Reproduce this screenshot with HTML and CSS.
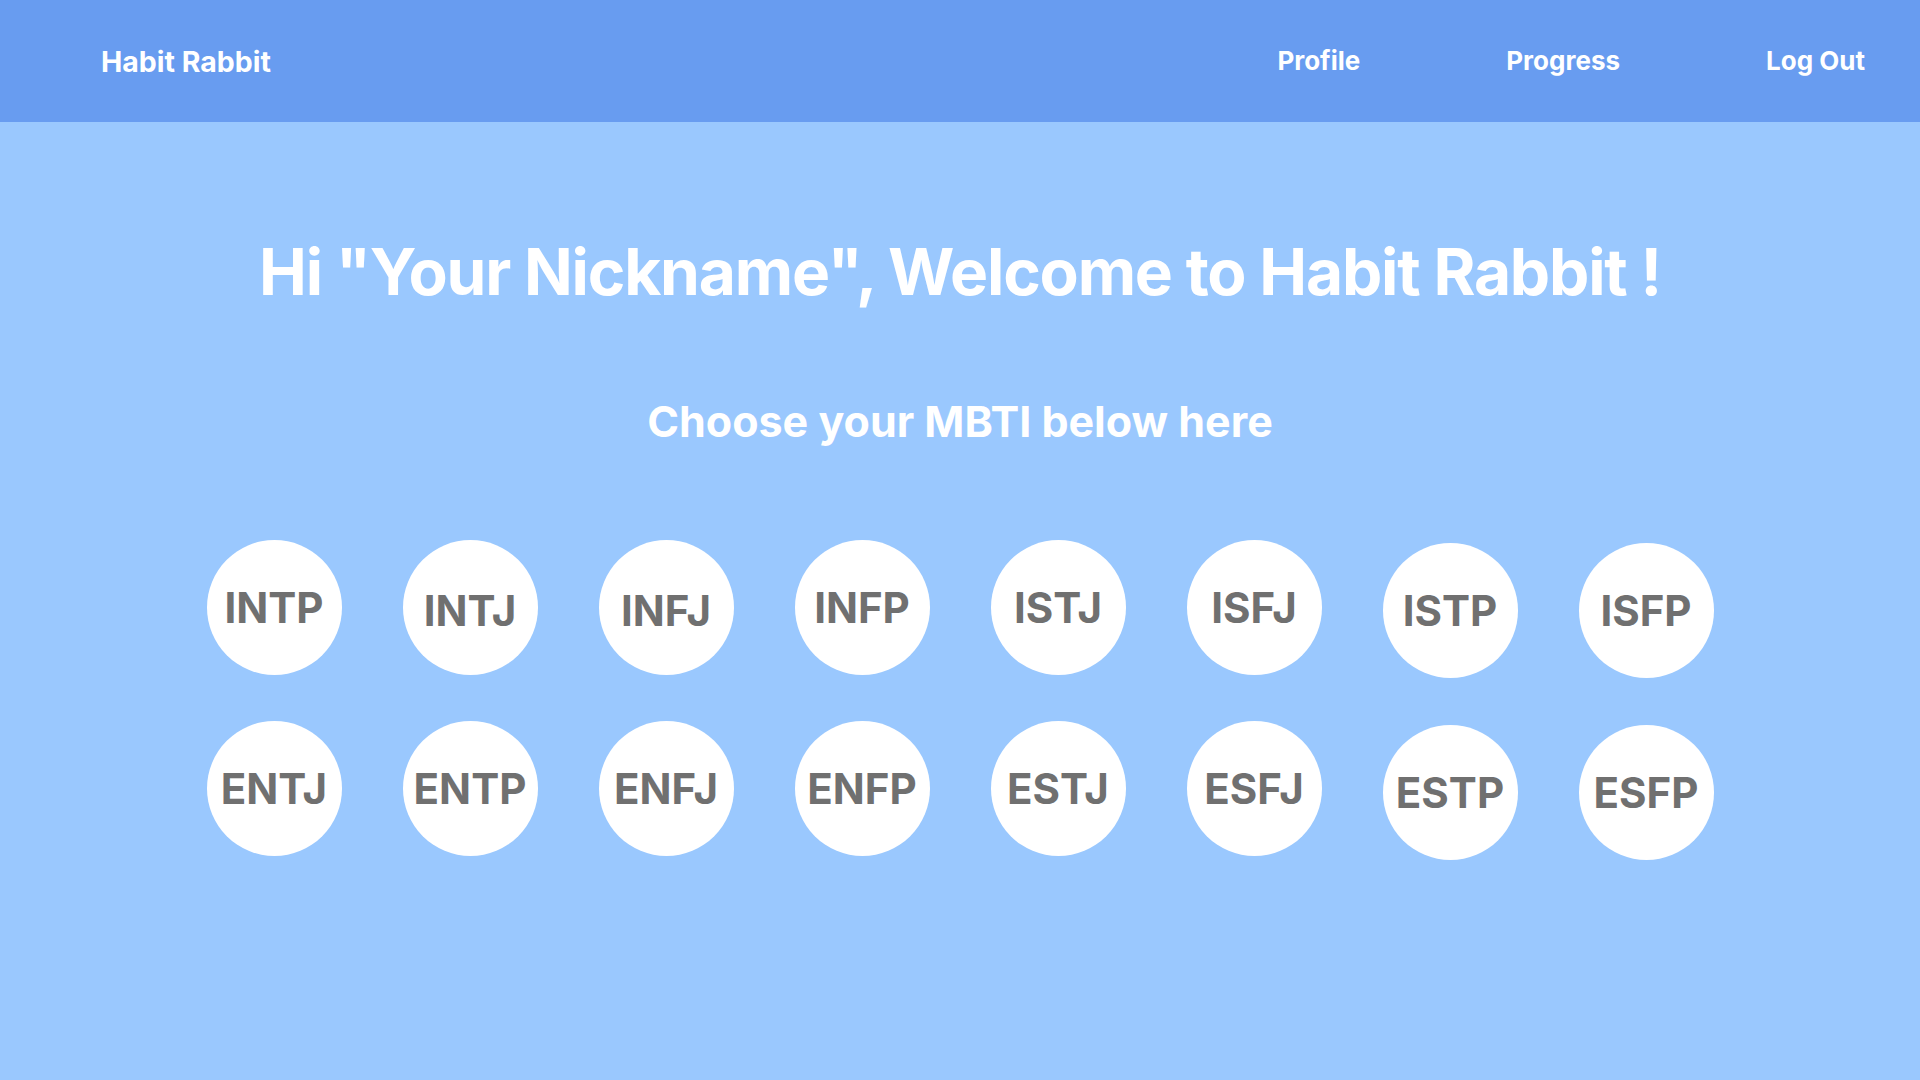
FILE: index.html
```html
<!DOCTYPE html>
<html lang="en">
<head>
<meta charset="utf-8">
<title>Habit Rabbit</title>
<link rel="stylesheet" href="styles.css">
</head>
<body>
<header class="topbar">
  <div class="brand">Habit Rabbit</div>
  <nav class="nav">
    <a class="nav-link" href="#">Profile</a>
    <a class="nav-link" href="#">Progress</a>
    <a class="nav-link" href="#">Log Out</a>
  </nav>
</header>
<main class="content">
  <h1 class="welcome">Hi "Your Nickname", Welcome to Habit Rabbit !</h1>
  <h2 class="prompt">Choose your MBTI below here</h2>
  <div class="mbti-grid">
    <button class="mbti">INTP</button>
    <button class="mbti txt-low">INTJ</button>
    <button class="mbti txt-low">INFJ</button>
    <button class="mbti">INFP</button>
    <button class="mbti">ISTJ</button>
    <button class="mbti">ISFJ</button>
    <button class="mbti low">ISTP</button>
    <button class="mbti low">ISFP</button>
    <button class="mbti">ENTJ</button>
    <button class="mbti">ENTP</button>
    <button class="mbti">ENFJ</button>
    <button class="mbti">ENFP</button>
    <button class="mbti">ESTJ</button>
    <button class="mbti">ESFJ</button>
    <button class="mbti lower">ESTP</button>
    <button class="mbti lower">ESFP</button>
  </div>
</main>
</body>
</html>
```
FILE: styles.css
```css
* { box-sizing: border-box; }
html, body {
  margin: 0;
  padding: 0;
  height: 100%;
}
body {
  background: #9ac8fe;
  font-family: Inter, "Open Sans", "Liberation Sans", sans-serif;
  font-weight: 700;
  color: #ffffff;
  overflow: hidden;
}
.topbar {
  height: 122px;
  background: #689cf0;
  display: flex;
  align-items: center;
  justify-content: space-between;
  padding: 0 55px 0 101px;
}
.brand {
  font-size: 28.5px;
  line-height: 1;
  padding-top: 2px;
}
.nav {
  display: flex;
  gap: 146px;
}
.nav-link {
  color: #ffffff;
  text-decoration: none;
  font-size: 26px;
  line-height: 1;
}
.content {
  display: flex;
  flex-direction: column;
  align-items: center;
}
.welcome {
  margin: 118px 0 0;
  font-size: 64px;
  line-height: 1;
  font-weight: 700;
  letter-spacing: -1.2px;
}
.prompt {
  margin: 96px 0 0;
  font-size: 43px;
  line-height: 1;
  font-weight: 700;
}
.mbti-grid {
  margin-top: 97px;
  display: grid;
  grid-template-columns: repeat(8, 135px);
  column-gap: 61px;
  row-gap: 43px;
  align-items: start;
}
.mbti {
  width: 135px;
  height: 135px;
  border-radius: 50%;
  border: none;
  background: #ffffff;
  color: #707070;
  font-family: inherit;
  font-weight: 700;
  font-size: 42px;
  line-height: 1;
  padding: 0;
  display: flex;
  align-items: center;
  justify-content: center;
  cursor: pointer;
}
.mbti.low { margin-top: 3px; }
.mbti.lower { margin-top: 4px; }
.mbti.txt-low { padding-top: 6px; }
```
